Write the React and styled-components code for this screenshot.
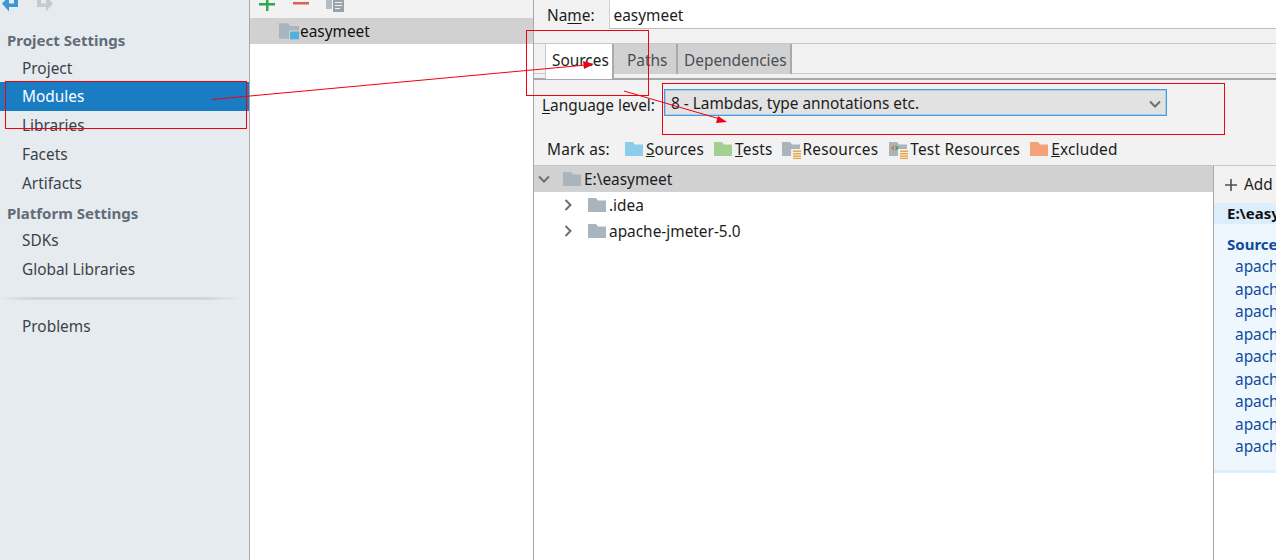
import React from "react";
import styled, { createGlobalStyle } from "styled-components";

const GlobalStyle = createGlobalStyle`
  html, body {
    margin: 0;
    padding: 0;
    background: #fff;
  }
  body {
    font-family: "Noto Sans", "Open Sans", sans-serif;
    font-size: 15.4px;
    color: #1c1c1c;
  }
`;

const Page = styled.div`
  position: relative;
  display: flex;
  width: 1276px;
  height: 560px;
  overflow: hidden;
`;

/* left nav */
const Sidebar = styled.aside`
  width: 249px;
  flex: none;
  background: #e6ebf0;
  border-right: 1px solid #a8a8a8;
  box-sizing: content-box;
`;

const NavIcons = styled.div`
  height: 26px;
  display: flex;
  gap: 16px;
  padding-left: 2px;
  align-items: flex-start;
`;

const SectionTitle = styled.div`
  height: ${(p) => p.$h || 28}px;
  line-height: 28px;
  padding-left: 7px;
  font-size: 15px;
  font-weight: 700;
  color: #616c78;
  margin-top: ${(p) => p.$top || 0}px;
`;

const NavItem = styled.div`
  height: ${(p) => p.$h || 29}px;
  line-height: ${(p) => p.$line || 29}px;
  padding-left: 22px;
  color: ${(p) => (p.$active ? "#fff" : "#3c4148")};
  background: ${(p) => (p.$active ? "#1a7dc4" : "transparent")};
`;

const Divider = styled.div`
  height: 3px;
  margin: 13px 8px 12px 0;
  background: linear-gradient(90deg, #e6ebf0, #d2d6da 12%, #d2d6da 85%, #e6ebf0);
`;

/* modules column */
const Middle = styled.section`
  width: 283px;
  flex: none;
  background: #fff;
  border-right: 1px solid #a8a8a8;
`;

const MiniToolbar = styled.div`
  height: 18px;
  background: #f2f2f2;
  display: flex;
  gap: 16px;
  padding-left: 8px;
  align-items: flex-start;
`;

const ModuleRow = styled.div`
  height: 26px;
  background: #d1d1d1;
  display: flex;
  align-items: center;
  padding-left: 29px;
  gap: 1px;
  color: #111;
`;

/* right part */
const Main = styled.main`
  flex: 1;
  min-width: 0;
  background: #f2f2f2;
  display: flex;
  flex-direction: column;
`;

const NameRow = styled.div`
  height: 29px;
  display: flex;
  align-items: center;
  padding-left: 13px;
  gap: 14px;
  margin-bottom: 14px;
`;

const Label = styled.span`
  color: #1c1c1c;
  white-space: nowrap;
  margin-top: ${(p) => p.$top || 0}px;
  u {
    text-underline-offset: 2px;
  }
`;

const NameInput = styled.div`
  flex: 1;
  height: 28px;
  line-height: 31px;
  background: #fff;
  border-left: 1px solid #cfcfcf;
  border-bottom: 1px solid #bdbdbd;
  padding-left: 4px;
`;

const TabStrip = styled.div`
  display: flex;
  height: 31px;
  padding-left: 11px;
  border-top: 1px solid #c8c8c8;
  border-bottom: 1px solid #c8c8c8;
  box-sizing: border-box;
`;

const Tab = styled.div`
  width: ${(p) => p.$w}px;
  padding-left: ${(p) => p.$pad}px;
  flex: none;
  height: ${(p) => (p.$active ? 35 : 30)}px;
  line-height: 33px;
  background: ${(p) => (p.$active ? "#fff" : "#d1d1d1")};
  color: ${(p) => (p.$active ? "#1c1c1c" : "#4a4f55")};
  border-right: 2px solid #aaa;
  border-left: ${(p) => (p.$active ? "1px solid #c8c8c8" : "0")};
  z-index: ${(p) => (p.$active ? 1 : 0)};
  box-sizing: border-box;
  white-space: nowrap;
`;

const TabRule = styled.div`
  height: 2px;
  margin-top: 4px;
  background: #a8a8a8;
`;

const LanguageRow = styled.div`
  display: flex;
  align-items: center;
  height: 27px;
  margin-top: 9px;
  padding-left: 8px;
  gap: 9px;
`;

const Combo = styled.div`
  width: 503px;
  height: 27px;
  box-sizing: border-box;
  border: 1px solid #4a9ad8;
  box-shadow: inset 0 0 0 1px #a9cfec;
  background: #e2e2e2;
  display: flex;
  align-items: center;
  justify-content: space-between;
  padding: 2px 5px 0 6px;
  color: #1c1c1c;
`;

const MarkRow = styled.div`
  display: flex;
  align-items: center;
  height: 28px;
  margin-top: 19px;
  padding-left: 13px;
  letter-spacing: 0.2px;
`;

const MarkItem = styled.span`
  display: inline-flex;
  align-items: center;
  gap: 3px;
  margin-right: ${(p) => p.$gap || 9}px;
  white-space: nowrap;
`;

const Split = styled.div`
  flex: 1;
  display: flex;
  min-height: 0;
  margin-top: 2px;
  background: #fff;
  border-top: 1px solid #c8c8c8;
`;

const Tree = styled.div`
  width: 679px;
  flex: none;
  border-right: 1px solid #a8a8a8;
`;

const TreeRow = styled.div`
  height: 26px;
  display: flex;
  align-items: center;
  padding-left: ${(p) => p.$indent}px;
  background: ${(p) => (p.$selected ? "#d1d1d1" : "transparent")};
  color: #1c1c1c;
  white-space: nowrap;
`;

const ExpanderGap = styled.span`
  width: ${(p) => p.$w}px;
  flex: none;
`;

const TreeLabel = styled.span`
  margin-left: 3px;
`;

const RootsPane = styled.div`
  flex: 1;
  min-width: 0;
  overflow: hidden;
  white-space: nowrap;
`;

const AddBar = styled.div`
  height: 37px;
  background: #f2f2f2;
  display: flex;
  align-items: center;
  padding-left: 10px;
  gap: 6px;
`;

const RootPath = styled.div`
  height: 21px;
  line-height: 21px;
  background: #dcedfb;
  padding-left: 13px;
  font-size: 15px;
  font-weight: 700;
  color: #111;
`;

const RootBody = styled.div`
  height: 249px;
  background: #eff7fe;
  border-bottom: 3px solid #ddeefc;
  padding-top: 9px;
  box-sizing: border-box;
`;

const RootHeading = styled.div`
  height: 23px;
  line-height: 22px;
  padding-left: 13px;
  font-size: 15px;
  font-weight: 700;
  color: #0e4a9e;
`;

const RootEntry = styled.div`
  height: 22.5px;
  line-height: 22.5px;
  padding-left: 21px;
  color: #0e4a9e;
`;

const Annotations = styled.svg`
  position: absolute;
  left: 0;
  top: 0;
  z-index: 2;
  pointer-events: none;
`;

const Folder = ({ color = "#aab4bc", w = 18, h = 14, children }) => (
  <svg width={w} height={h} viewBox="0 0 18 14" style={{ flex: "none", overflow: "visible" }}>
    <path d="M0 0H8L10 2.5H18V14H0Z" fill={color} />
    {children}
  </svg>
);

// orange lines on the resource folders, they hang a bit below the folder
const Lines = () => (
  <g>
    <rect x="9" y="7" width="11" height="10" fill="#f2f2f2" />
    <g fill="#e8a33d">
      <rect x="11" y="8.5" width="8" height="1.4" />
      <rect x="11" y="11" width="8" height="1.4" />
      <rect x="11" y="13.5" width="8" height="1.4" />
      <rect x="11" y="15.8" width="8" height="1.2" />
    </g>
  </g>
);

const Chevron = ({ open }) => (
  <svg width="12" height="12" viewBox="0 0 12 12" style={{ flex: "none" }}>
    <path
      d={open ? "M1 3.5L6 8.5L11 3.5" : "M3.5 1L8.5 6L3.5 11"}
      fill="none"
      stroke="#6e6e6e"
      strokeWidth="2"
    />
  </svg>
);

const entries = Array.from({ length: 9 }, (_, i) => i);

export default function App() {
  return (
    <>
      <GlobalStyle />
      <Page>
        <Sidebar>
          <NavIcons>
            <svg width="17" height="12" viewBox="0 0 17 12">
              <path d="M0 3.5L7 11.5V7H16V0H12V3.5H7V0H3.5Z" fill="#3d97d3" />
            </svg>
            <svg width="17" height="12" viewBox="0 0 17 12" style={{ marginLeft: 2 }}>
              <path d="M16 3.5L9 11.5V7H0V0H4V3.5H9V0H12.5Z" fill="#c6cacd" />
            </svg>
          </NavIcons>
          <SectionTitle>Project Settings</SectionTitle>
          <NavItem $h={28} $line={30}>Project</NavItem>
          <NavItem $active>Modules</NavItem>
          <NavItem>Libraries</NavItem>
          <NavItem>Facets</NavItem>
          <NavItem>Artifacts</NavItem>
          <SectionTitle $top={1} $h={27}>Platform Settings</SectionTitle>
          <NavItem>SDKs</NavItem>
          <NavItem>Global Libraries</NavItem>
          <Divider />
          <NavItem>Problems</NavItem>
        </Sidebar>

        <Middle>
          <MiniToolbar>
            <svg width="18" height="11" viewBox="0 0 18 11">
              <path d="M8 0H10.5V3H17V5.5H10.5V11H8V5.5H1V3H8Z" fill="#2fa84f" />
            </svg>
            <svg width="18" height="11" viewBox="0 0 18 11">
              <rect x="1" y="2" width="16" height="2.5" fill="#d9605a" />
            </svg>
            <svg width="18" height="12" viewBox="0 0 18 12">
              <rect x="0" y="0" width="6" height="9" fill="#b5bdc4" />
              <rect x="7" y="0" width="11" height="12" fill="#9aa3ab" />
              <path d="M9 2.5H16M9 5.5H16M9 8.5H14" stroke="#f2f2f2" />
            </svg>
          </MiniToolbar>
          <ModuleRow>
            <Folder w={20} h={16}>
              <rect x="9" y="6.5" width="9" height="7.5" fill="#d1d1d1" />
              <rect x="10" y="7.5" width="8" height="7" fill="#4fb1e0" />
            </Folder>
            easymeet
          </ModuleRow>
        </Middle>

        <Main>
          <NameRow>
            <Label $top={2}>
              Na<u>m</u>e:
            </Label>
            <NameInput>easymeet</NameInput>
          </NameRow>

          <TabStrip>
            <Tab $active $w={69} $pad={6}>Sources</Tab>
            <Tab $w={64} $pad={13}>Paths</Tab>
            <Tab $w={114} $pad={6}>Dependencies</Tab>
          </TabStrip>
          <TabRule />

          <LanguageRow>
            <Label $top={5}>
              <u>L</u>anguage level:
            </Label>
            <Combo>
              8 - Lambdas, type annotations etc.
              <Chevron open />
            </Combo>
          </LanguageRow>

          <MarkRow>
            <MarkItem $gap={15}>Mark as:</MarkItem>
            <MarkItem $gap={10}>
              <Folder color="#8ccdea" />
              <span>
                <u>S</u>ources
              </span>
            </MarkItem>
            <MarkItem $gap={9}>
              <Folder color="#a3cf8f" />
              <span>
                <u>T</u>ests
              </span>
            </MarkItem>
            <MarkItem $gap={11}>
              <Folder>
                <Lines />
              </Folder>
              Resources
            </MarkItem>
            <MarkItem $gap={10}>
              <Folder>
                <Lines />
                <path d="M1.5 6L5 3V9Z" fill="#e07b39" />
                <path d="M10 6L6.5 3V9Z" fill="#4fa84f" />
              </Folder>
              Test Resources
            </MarkItem>
            <MarkItem>
              <Folder color="#f4a27a" />
              <span>
                <u>E</u>xcluded
              </span>
            </MarkItem>
          </MarkRow>

          <Split>
            <Tree>
              <TreeRow $selected $indent={4}>
                <Chevron open />
                <ExpanderGap $w={13} />
                <Folder />
                <TreeLabel>E:\easymeet</TreeLabel>
              </TreeRow>
              <TreeRow $indent={28}>
                <Chevron />
                <ExpanderGap $w={14} />
                <Folder />
                <TreeLabel>.idea</TreeLabel>
              </TreeRow>
              <TreeRow $indent={28}>
                <Chevron />
                <ExpanderGap $w={14} />
                <Folder />
                <TreeLabel>apache-jmeter-5.0</TreeLabel>
              </TreeRow>
            </Tree>
            <RootsPane>
              <AddBar>
                <svg width="14" height="14" viewBox="0 0 14 14" style={{ flex: "none" }}>
                  <path d="M7 1V13M1 7H13" stroke="#505050" strokeWidth="1.6" />
                </svg>
                Add Content Root
              </AddBar>
              <RootPath>E:\easymeet</RootPath>
              <RootBody>
                <RootHeading>Source Folders</RootHeading>
                {entries.map((i) => (
                  <RootEntry key={i}>apache-jmeter-5.0</RootEntry>
                ))}
              </RootBody>
            </RootsPane>
          </Split>
        </Main>

        <Annotations width="1276" height="560" viewBox="0 0 1276 560">
          <g fill="none" stroke="#f00010" strokeWidth="1">
            <rect x="5.5" y="81.5" width="241" height="47" />
            <rect x="526.5" y="30.5" width="122" height="65" />
            <rect x="662.5" y="83.5" width="562" height="51" />
            <path d="M212 99.5L586 65" />
            <path d="M624 91L720 119" />
          </g>
          <path d="M594 64L583 61L584 69Z" fill="#f00010" />
          <path d="M727 122L718 116L716 123Z" fill="#f00010" />
        </Annotations>
      </Page>
    </>
  );
}
